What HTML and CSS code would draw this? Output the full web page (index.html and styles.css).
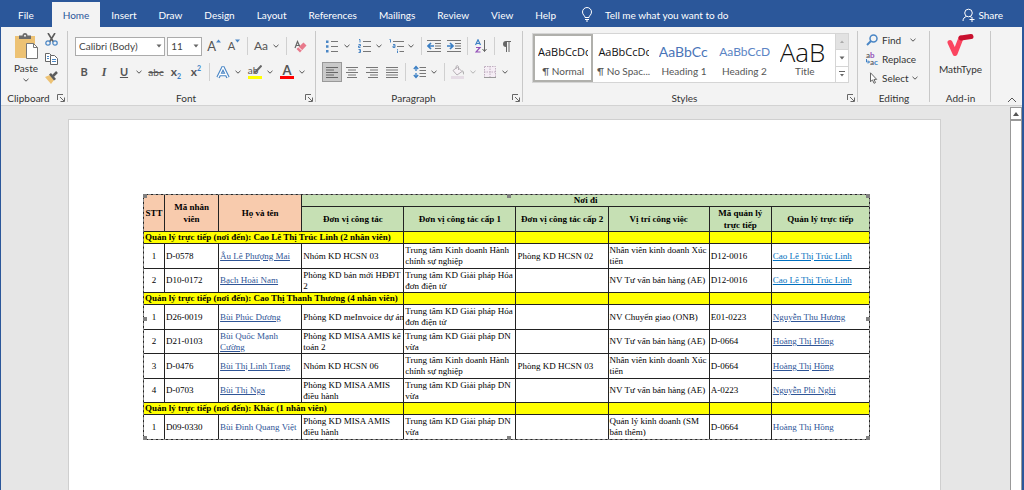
FILE: index.html
```html
<!DOCTYPE html>
<html lang="vi">
<head>
<meta charset="utf-8">
<title>Word</title>
<link rel="stylesheet" href="styles.css">
</head>
<body>
<svg class="defs" aria-hidden="true">
  <symbol id="chev" viewBox="0 0 6 6"><path d="M.5 1.800l2.500 2.400 2.500-2.400" fill="none" stroke="#555" stroke-width="1"/></symbol>
  <symbol id="tri" viewBox="0 0 6 6"><path d="M.5 1.500h5L3 4.500z" fill="#666"/></symbol>
  <symbol id="launch" viewBox="0 0 8 8"><path d="M.5 6V.5H6M3 3l4 4M7.500 3.500v4h-4" fill="none" stroke="#666"/></symbol>
</svg>
<nav class="tabs" aria-label="Ribbon tabs">
  <button class="tab file">File</button>
  <button class="tab active">Home</button>
  <button class="tab">Insert</button>
  <button class="tab">Draw</button>
  <button class="tab">Design</button>
  <button class="tab">Layout</button>
  <button class="tab">References</button>
  <button class="tab">Mailings</button>
  <button class="tab">Review</button>
  <button class="tab">View</button>
  <button class="tab">Help</button>
  <button class="tab tell"><svg width="12" height="15" viewBox="0 0 12 15" fill="none" stroke="#fff"><path d="M4 10.500C4 8.500 1.500 8 1.500 5a4.500 4.500 0 0 1 9 0c0 3-2.500 3.500-2.500 5.500zM4 12.500h4M5 14h2"/></svg>Tell me what you want to do</button>
  <button class="tab share"><svg width="13" height="14" viewBox="0 0 13 14" fill="none" stroke="#fff"><circle cx="6.500" cy="5" r="3.800"/><path d="M1 13c0-2.500 1.500-4 3.500-4.500M8 8.500l1.500.8M10 9v5M7.500 11.500h5"/></svg>Share</button>
</nav>

<section class="ribbon">
  <div class="group clipboard">
    <div class="clip-body">
      <button class="paste">
        <svg width="25" height="27" viewBox="0 0 25 27"><path d="M1 3h20v22H1z" fill="#edc274"/><path d="M5 6V2.500h3.500a2.500 2.500 0 0 1 5 0H17V6z" fill="#6b6b6b"/><circle cx="11" cy="2.800" r="1" fill="#f3f3f3"/><path d="M12.500 10.500h7l4 4v11h-11z" fill="#fff" stroke="#777"/><path d="M19.500 10.500v4h4" fill="none" stroke="#777"/></svg>
        <span>Paste</span>
        <svg width="6" height="6"><use href="#chev"/></svg>
      </button>
      <div class="clip-side">
        <button aria-label="Cut"><svg width="13" height="13" viewBox="0 0 13 13" fill="none"><path d="M3 0l5.500 9M10 0L4.500 9" stroke="#5c5c5c" stroke-width="1.600"/><circle cx="3" cy="10" r="2.200" stroke="#4a86c5" stroke-width="1.200"/><circle cx="10" cy="10" r="2.200" stroke="#4a86c5" stroke-width="1.200"/></svg></button>
        <button aria-label="Copy"><svg width="13" height="13" viewBox="0 0 13 13" fill="#fff" stroke="#666"><path d="M.5 1.500h4l2 2v6h-6z"/><path d="M5.500 3.500h4l3 3v6h-7z"/><path d="M2 4.500h2M2 6.500h2M7 7.500h4M7 9.500h4" stroke="#4a86c5"/></svg></button>
        <button aria-label="Format Painter"><svg width="13" height="13" viewBox="0 0 13 13"><path d="M0 6l5-2 4 5-3 4z" fill="#edc274"/><path d="M4 3.500l2-1.500 5 6-2 1.500z" fill="#5c5c5c"/><path d="M8 5l4-4" stroke="#5c5c5c" stroke-width="2.500"/></svg></button>
      </div>
    </div>
    <div class="caption"><span>Clipboard</span><button aria-label="Clipboard options"><svg width="8" height="8"><use href="#launch"/></svg></button></div>
  </div>

  <div class="group font">
    <div class="row">
      <label class="combo family"><select aria-label="Font"><option>Calibri (Body)</option></select><svg width="6" height="6"><use href="#tri"/></svg></label>
      <label class="combo size"><select aria-label="Font size"><option>11</option></select><svg width="6" height="6"><use href="#tri"/></svg></label>
      <button class="tool grow" aria-label="Grow font">A<svg width="5" height="4" viewBox="0 0 5 4"><path d="M0 3.500h5L2.500.5z" fill="#4a86c5"/></svg></button>
      <button class="tool shrink" aria-label="Shrink font">A<svg width="5" height="4" viewBox="0 0 5 4"><path d="M0 .5h5L2.500 3.500z" fill="#4a86c5"/></svg></button>
      <i class="sep"></i>
      <button class="tool case">Aa</button>
      <button class="drop" aria-label="Change case"><svg width="6" height="6"><use href="#chev"/></svg></button>
      <i class="sep"></i>
      <button class="tool" aria-label="Clear formatting"><svg width="13" height="13" viewBox="0 0 13 13"><path d="M1 8L3.500 1.500 6 7M2 5.500h3" fill="none" stroke="#666" stroke-width="1.200"/><path d="M9.500 2.500l3 3-6.500 7-3.500-3.500z" fill="#e8798b"/><path d="M4.500 7l3.500 3.500" stroke="#fff"/></svg></button>
    </div>
    <div class="row">
      <button class="tool bold">B</button>
      <button class="tool italic">I</button>
      <button class="tool under">U</button>
      <button class="drop" aria-label="Underline style"><svg width="6" height="6"><use href="#chev"/></svg></button>
      <button class="tool strike">abc</button>
      <button class="tool script">x<sub>2</sub></button>
      <button class="tool script">x<sup>2</sup></button>
      <i class="sep"></i>
      <button class="tool" aria-label="Text effects"><svg width="14" height="13" viewBox="0 0 14 13"><path d="M2 11.500L7 1.500l5 10M4 8.500h6" fill="none" stroke="#4a86c5" stroke-width="3.600" stroke-linejoin="round"/><path d="M2 11.500L7 1.500l5 10M4 8.500h6" fill="none" stroke="#fff" stroke-width="1.300"/></svg></button>
      <button class="drop" aria-label="Effects menu"><svg width="6" height="6"><use href="#chev"/></svg></button>
      <button class="tool mark">ab<svg width="9" height="8" viewBox="0 0 9 8"><path d="M8.500.5L3 6.500 1 7.500" stroke="#666" stroke-width="2"/></svg></button>
      <button class="drop" aria-label="Highlight colours"><svg width="6" height="6"><use href="#chev"/></svg></button>
      <button class="tool colour">A</button>
      <button class="drop" aria-label="Font colours"><svg width="6" height="6"><use href="#chev"/></svg></button>
    </div>
    <div class="caption"><span>Font</span><button aria-label="Font options"><svg width="8" height="8"><use href="#launch"/></svg></button></div>
  </div>

  <div class="group para">
    <div class="row">
      <button class="tool" aria-label="Bullets"><svg width="12" height="13" viewBox="0 0 12 13"><path d="M0 .5h2.500V3H0zM0 5.300h2.500v2.500H0zM0 10h2.500v2.500H0z" fill="#4a86c5"/><path d="M5 1.500h7M5 6.500h7M5 11.500h7" stroke="#777"/></svg></button>
      <button class="drop" aria-label="Bullet library"><svg width="6" height="6"><use href="#chev"/></svg></button>
      <button class="tool" aria-label="Numbering"><svg width="13" height="14" viewBox="0 0 13 14"><path d="M1 .5h1v3M.5 5.500h2V7h-2v1.500h2M.5 10.500h2v3h-2M1 12h1" fill="none" stroke="#4a86c5"/><path d="M5 2.500h8M5 7.500h8M5 12.500h8" stroke="#777"/></svg></button>
      <button class="drop" aria-label="Numbering library"><svg width="6" height="6"><use href="#chev"/></svg></button>
      <button class="tool" aria-label="Multilevel list"><svg width="15" height="14" viewBox="0 0 15 14"><path d="M.5.5h1v3M4 5.500h2v3H4V7h2M8.500 10v.8M8.500 11.500V14" fill="none" stroke="#4a86c5"/><path d="M4 2.500h11M8 7.500h7M10.500 12.500H15" stroke="#777"/></svg></button>
      <button class="drop" aria-label="List library"><svg width="6" height="6"><use href="#chev"/></svg></button>
      <i class="sep"></i>
      <button class="tool" aria-label="Decrease indent"><svg width="14" height="12" viewBox="0 0 14 12"><path d="M0 .5h14M8 3.500h6M8 6h6M8 8.500h6M0 11.500h14" stroke="#777"/><path d="M1 6h6M4 3L1 6l3 3" fill="none" stroke="#3b7fc4" stroke-width="1.700"/></svg></button>
      <button class="tool" aria-label="Increase indent"><svg width="14" height="12" viewBox="0 0 14 12"><path d="M0 .5h14M8 3.500h6M8 6h6M8 8.500h6M0 11.500h14" stroke="#777"/><path d="M0 6h6M3 3l3 3-3 3" fill="none" stroke="#3b7fc4" stroke-width="1.700"/></svg></button>
      <i class="sep"></i>
      <button class="tool" aria-label="Sort"><svg width="12" height="14" viewBox="0 0 12 14" fill="none"><path d="M.5 6L3 .8 5.500 6M1.500 4.500h3" stroke="#3b7fc4" stroke-width="1.200"/><path d="M1 8.500h4l-4 4.500h4.500" stroke="#9350b8" stroke-width="1.200"/><path d="M9.500 1v11.500M7.500 10l2 2.500 2-2.500" stroke="#666"/></svg></button>
      <i class="sep"></i>
      <button class="tool" aria-label="Show marks"><svg width="9" height="11" viewBox="0 0 9 11"><path d="M4 0h5v1H4zM4 6a3 3 0 0 1 0-6h1v6z" fill="#666"/><path d="M4.500 0v11M7 0v11" stroke="#666"/></svg></button>
    </div>
    <div class="row">
      <button class="tool on" aria-label="Align left"><svg width="12" height="11" viewBox="0 0 12 11"><path d="M0 .5h12M0 3h8M0 5.500h12M0 8h8M0 10.500h12" stroke="#666"/></svg></button>
      <button class="tool" aria-label="Centre"><svg width="12" height="11" viewBox="0 0 12 11"><path d="M0 .5h12M2 3h8M0 5.500h12M2 8h8M1 10.500h10" stroke="#777"/></svg></button>
      <button class="tool" aria-label="Align right"><svg width="12" height="11" viewBox="0 0 12 11"><path d="M0 .5h12M4 3h8M0 5.500h12M4 8h8M2 10.500h10" stroke="#777"/></svg></button>
      <button class="tool" aria-label="Justify"><svg width="12" height="11" viewBox="0 0 12 11"><path d="M0 .5h12M0 3h12M0 5.500h12M0 8h12M0 10.500h12" stroke="#777"/></svg></button>
      <i class="sep"></i>
      <button class="tool" aria-label="Line spacing"><svg width="13" height="14" viewBox="0 0 13 14"><path d="M3 1v12M.8 4L3 1.500 5.200 4M.8 10L3 12.500 5.200 10" fill="none" stroke="#3b7fc4" stroke-width="1.300"/><path d="M3 6v2" stroke="#f3f3f3" stroke-width="2"/><path d="M6.500 2.500H13M6.500 5.500H13M6.500 8.500H13M6.500 11.500H13" stroke="#777"/></svg></button>
      <button class="drop" aria-label="Spacing menu"><svg width="6" height="6"><use href="#chev"/></svg></button>
      <i class="sep"></i>
      <button class="tool" aria-label="Shading"><svg width="14" height="14" viewBox="0 0 14 14"><path d="M2 5.500L6.500 2 11 6.500 6 10z" fill="#f7f2f6" stroke="#b5b0b5"/><path d="M5 4V1.500Q6.500-.5 7.500 1.500V5" fill="none" stroke="#b5b0b5"/><path d="M11 5q3 2 1.500 5z" fill="#a9a9a9"/><path d="M0 11h13v3H0z" fill="#e5dce5"/></svg></button>
      <button class="drop faint" aria-label="Shading menu"><svg width="6" height="6"><use href="#chev"/></svg></button>
      <button class="tool" aria-label="Borders"><svg width="12" height="12" viewBox="0 0 12 12"><path d="M.5.5h11v11H.5zM6 0v12M0 6h12" fill="#f5edf5" stroke="#c0afc0" stroke-dasharray="1.500 1"/><path d="M0 11.500h12" stroke="#999"/></svg></button>
      <button class="drop" aria-label="Borders menu"><svg width="6" height="6"><use href="#chev"/></svg></button>
    </div>
    <div class="caption"><span>Paragraph</span><button aria-label="Paragraph options"><svg width="8" height="8"><use href="#launch"/></svg></button></div>
  </div>

  <div class="group styles">
    <div class="gallery">
      <button class="style chosen"><span class="sample">AaBbCcDc</span><span>¶ Normal</span></button>
      <button class="style"><span class="sample">AaBbCcDc</span><span>¶ No Spac...</span></button>
      <button class="style h1"><span class="sample">AaBbCc</span><span>Heading 1</span></button>
      <button class="style h2"><span class="sample">AaBbCcD</span><span>Heading 2</span></button>
      <button class="style title"><span class="sample">AaB</span><span>Title</span></button>
      <div class="scroller">
        <button class="off" aria-label="Previous styles"><svg width="6" height="6" viewBox="0 0 6 6"><path d="M1 4h4L3 1.500z" fill="#aaa"/></svg></button>
        <button aria-label="Next styles"><svg width="6" height="6"><use href="#tri"/></svg></button>
        <button aria-label="More styles"><svg width="6" height="8" viewBox="0 0 6 8"><path d="M0 1.500h6" stroke="#666"/><path d="M1 4h4L3 6.500z" fill="#666"/></svg></button>
      </div>
    </div>
    <div class="caption"><span>Styles</span><button aria-label="Styles options"><svg width="8" height="8"><use href="#launch"/></svg></button></div>
  </div>

  <div class="group editing">
    <div class="edit-list">
      <button><svg width="13" height="12" viewBox="0 0 13 12" fill="none" stroke="#4a86c5"><circle cx="7.500" cy="4.500" r="3.500" stroke-width="1.500"/><path d="M5 7L1 11" stroke-width="2"/></svg>Find<svg class="far" width="6" height="6"><use href="#chev"/></svg></button>
      <button><span class="swap"><b>a<em>b</em></b><b><svg width="4" height="5" viewBox="0 0 4 5" fill="none" stroke="#3b7fc4"><path d="M.5 0v3h3M2 1.500L3.500 3 2 4.500"/></svg>a<i>c</i></b></span>Replace</button>
      <button><svg width="13" height="12" viewBox="0 0 13 12"><path d="M4.500.8v9l2-2 1.500 3.500 1.500-.7-1.500-3.200h2.700z" fill="#fff" stroke="#666"/></svg>Select<svg width="6" height="6"><use href="#chev"/></svg></button>
    </div>
    <div class="caption"><span>Editing</span></div>
  </div>

  <div class="group addin">
    <button class="math"><svg width="27" height="24" viewBox="0 0 27 24" fill="none" stroke-linecap="round" stroke-linejoin="round"><path d="M3 9.500l5 11L14 5" stroke="#fb4560" stroke-width="5"/><path d="M14 5l10-1.500" stroke="#c8102e" stroke-width="5"/></svg>MathType</button>
    <div class="caption"><span>Add-in</span></div>
  </div>

  <button class="collapse" aria-label="Collapse ribbon"><svg width="10" height="6" viewBox="0 0 10 6"><path d="M1 5l4-4 4 4" fill="none" stroke="#555"/></svg></button>
</section>

<main class="work">
  <article class="page">
    <div class="object">
      <table>
        <colgroup><col class="c-no"><col class="c-id"><col class="c-name"><col class="c-unit"><col class="c-lv1"><col class="c-lv2"><col class="c-job"><col class="c-mid"><col class="c-mgr"></colgroup>
        <thead>
          <tr><th rowspan="2" class="peach">STT</th><th rowspan="2" class="peach">Mã nhân<br>viên</th><th rowspan="2" class="peach">Họ và tên</th><th colspan="6">Nơi đi</th></tr>
          <tr class="tall"><th>Đơn vị công tác</th><th>Đơn vị công tác cấp 1</th><th>Đơn vị công tác cấp 2</th><th>Vị trí công việc</th><th>Mã quản lý<br>trực tiếp</th><th>Quản lý trực tiếp</th></tr>
        </thead>
        <tbody>
          <tr class="band"><th colspan="4">Quản lý trực tiếp (nơi đến): Cao Lê Thị Trúc Linh (2 nhân viên)</th><td></td><td></td><td></td><td></td><td></td></tr>
          <tr><td>1</td><td>D-0578</td><td><a href="#">Âu Lê Phượng Mai</a></td><td>Nhóm KD HCSN 03</td><td>Trung tâm Kinh doanh Hành<br>chính sự nghiệp</td><td>Phòng KD HCSN 02</td><td>Nhân viên kinh doanh Xúc<br>tiến</td><td>D12-0016</td><td><a href="#" class="bright">Cao Lê Thị Trúc Linh</a></td></tr>
          <tr><td>2</td><td>D10-0172</td><td><a href="#">Bạch Hoài Nam</a></td><td>Phòng KD bán mới HĐĐT<br>2</td><td>Trung tâm KD Giải pháp Hóa<br>đơn điện tử</td><td></td><td>NV Tư vấn bán hàng (AE)</td><td>D12-0016</td><td><a href="#" class="bright">Cao Lê Thị Trúc Linh</a></td></tr>
        </tbody>
        <tbody>
          <tr class="band"><th colspan="4">Quản lý trực tiếp (nơi đến): Cao Thị Thanh Thương (4 nhân viên)</th><td></td><td></td><td></td><td></td><td></td></tr>
          <tr><td>1</td><td>D26-0019</td><td><a href="#">Bùi Phúc Dương</a></td><td>Phòng KD meInvoice dự án</td><td>Trung tâm KD Giải pháp Hóa<br>đơn điện tử</td><td></td><td>NV Chuyển giao (ONB)</td><td>E01-0223</td><td><a href="#">Nguyễn Thu Hương</a></td></tr>
          <tr><td>2</td><td>D21-0103</td><td><a href="#"><span class="plain">Bùi Quốc Mạnh</span><br>Cường</a></td><td>Phòng KD MISA AMIS kế<br>toán 2</td><td>Trung tâm KD Giải pháp DN<br>vừa</td><td></td><td>NV Tư vấn bán hàng (AE)</td><td>D-0664</td><td><a href="#">Hoàng Thị Hồng</a></td></tr>
          <tr><td>3</td><td>D-0476</td><td><a href="#">Bùi Thị Linh Trang</a></td><td>Nhóm KD HCSN 06</td><td>Trung tâm Kinh doanh Hành<br>chính sự nghiệp</td><td>Phòng KD HCSN 03</td><td>Nhân viên kinh doanh Xúc<br>tiến</td><td>D-0664</td><td><a href="#">Hoàng Thị Hồng</a></td></tr>
          <tr><td>4</td><td>D-0703</td><td><a href="#">Bùi Thị Nga</a></td><td>Phòng KD MISA AMIS<br>điều hành</td><td>Trung tâm KD Giải pháp DN<br>vừa</td><td></td><td>NV Tư vấn bán hàng (AE)</td><td>A-0223</td><td><a href="#">Nguyễn Phi Nghị</a></td></tr>
        </tbody>
        <tbody>
          <tr class="band"><th colspan="4">Quản lý trực tiếp (nơi đến): Khác (1 nhân viên)</th><td></td><td></td><td></td><td></td><td></td></tr>
          <tr><td>1</td><td>D09-0330</td><td><a href="#" class="plain">Bùi Đinh Quang Việt</a></td><td>Phòng KD MISA AMIS<br>điều hành</td><td>Trung tâm KD Giải pháp DN<br>vừa</td><td></td><td>Quản lý kinh doanh (SM<br>bán thêm)</td><td>D-0664</td><td><a href="#" class="plain">Hoàng Thị Hồng</a></td></tr>
        </tbody>
      </table>
      <i class="handle n w"></i><i class="handle n mid"></i><i class="handle n e"></i>
      <i class="handle half w"></i><i class="handle half e"></i>
      <i class="handle s w"></i><i class="handle s mid"></i><i class="handle s e"></i>
    </div>
  </article>
  <div class="scrollbar"><button aria-label="Scroll up"><svg width="6" height="6" viewBox="0 0 6 6"><path d="M0 5h6L3 1z" fill="#555"/></svg></button><div class="thumb"></div></div>
</main>
</body>
</html>
```
FILE: styles.css
```css
* { box-sizing: border-box; }
html, body { height: 100%; margin: 0; }
body {
  display: flex;
  flex-direction: column;
  overflow: hidden;
  background: #2b579a;
  font: 10px/14px Lato, "Open Sans", sans-serif;
  color: #333;
}
button, select { font: inherit; color: inherit; border: 0; margin: 0; padding: 0; background: none; }
svg { display: block; flex: none; }
.defs { position: absolute; width: 0; height: 0; }

/* tabs */
.tabs { display: flex; flex: none; height: 27px; padding-top: 2px; }
.tab { display: flex; align-items: center; padding: 0 11px; color: #fff; white-space: nowrap; }
.file { padding: 0 18px; }
.active { background: #f3f3f3; color: #2b579a; }
.tell { gap: 12px; padding-left: 14px; }
.share { gap: 3px; margin-left: auto; padding-right: 21px; }

/* ribbon */
.ribbon {
  display: flex;
  flex: none;
  height: 79px;
  margin: 0 2px 0 1px;
  background: #f3f3f3;
  border-bottom: 1px solid #d2d2d2;
}
.group {
  position: relative;
  display: flex;
  flex-direction: column;
  flex: none;
  padding: 6px 6px 0;
}
.group::after {
  content: "";
  position: absolute;
  top: 4px;
  bottom: 3px;
  right: 0;
  width: 1px;
  background: #c8c8c8;
}
.clipboard { width: 67px; }
.font { width: 248px; }
.para { width: 207px; }
.styles { width: 335px; }
.editing { width: 72px; padding-top: 3px; }
.addin { width: 61px; }
.caption { display: flex; align-items: center; height: 14px; margin-top: auto; }
.caption span { flex: 1; text-align: center; }
.caption span:not(:last-child) { padding-right: 7px; }
.caption button { width: 8px; margin-right: -3px; }

.clip-body { display: flex; justify-content: space-between; }
.paste { display: flex; flex-direction: column; align-items: center; width: 38px; }
.paste span { line-height: 17px; }
.clip-side { display: flex; flex-direction: column; gap: 6px; margin-right: 4px; }
.clip-side button { height: 13px; }

.row { display: flex; align-items: center; height: 26px; }
.tool { display: flex; align-items: center; justify-content: center; width: 20px; height: 20px; flex: none; color: #555; }
.drop { width: 12px; height: 20px; flex: none; padding-left: 2px; }
.faint { opacity: .4; }
.sep { width: 1px; height: 18px; margin: 0 3px; background: #d0d0d0; }
.on { background: #c9c9c9; border: 1px solid #999; }
.combo { position: relative; display: block; height: 19px; margin-right: 2px; }
.combo select { width: 100%; height: 100%; padding: 0 12px 0 3px; appearance: none; background: #fff; border: 1px solid #ababab; color: #444; }
.combo svg { position: absolute; right: 3px; top: 6px; }
.family { width: 93px; margin-left: 1px; }
.size { width: 36px; }
.grow { font-size: 13px; }
.shrink { font-size: 11px; }
.grow svg, .shrink svg { align-self: flex-start; margin-top: 3px; }
.case { font-size: 12px; }
.bold { font-weight: bold; font-size: 11px; }
.italic { font: italic bold 12px "Liberation Serif", serif; }
.under { font-weight: bold; font-size: 11px; text-decoration: underline; }
.strike { text-decoration: line-through; }
.script { font-size: 12px; font-weight: bold; line-height: 12px; }
.script sub, .script sup { font-size: 7px; color: #3b7fc4; line-height: 7px; }
.script sub { align-self: flex-end; margin-bottom: 2px; }
.script sup { align-self: flex-start; margin-top: 3px; }
.mark { width: 14px; height: 14px; margin: 0 3px; line-height: 10px; align-items: flex-start; border-bottom: 3px solid #ff0; }
.mark svg { margin-left: -5px; }
.colour { width: 14px; height: 14px; margin: 0 3px; font-size: 13px; font-weight: bold; line-height: 11px; align-items: flex-end; border-bottom: 3px solid #f00; }

/* style gallery */
.gallery { display: flex; height: 50px; margin: 0 3px; background: #fff; border: 1px solid #d5d5d5; }
.style { display: flex; flex-direction: column; align-items: center; flex: 1; min-width: 0; padding: 6px 5px 0; color: #555; white-space: nowrap; }
.sample { width: 100%; height: 24px; overflow: hidden; text-align: left; color: #111; font: 11px/24px "Open Sans", sans-serif; }
.chosen { outline: 2px solid #b0b0ac; outline-offset: -2px; }
.h1 .sample { font: 14px/24px Lato, sans-serif; color: #4a74b8; }
.h2 .sample { font: 12px/24px Lato, sans-serif; color: #5b84c4; }
.title .sample { font: 300 26px/24px "Open Sans", Lato, sans-serif; }
.scroller { display: flex; flex-direction: column; width: 13px; flex: none; border-left: 1px solid #d5d5d5; }
.scroller button { display: flex; flex: 1; align-items: center; justify-content: center; }
.scroller button + button { border-top: 1px solid #d5d5d5; }
.off { background: #e2e2e2; }

.edit-list { display: flex; flex-direction: column; margin-left: 2px; }
.edit-list button { display: flex; align-items: center; gap: 3px; height: 19px; text-align: left; }
.edit-list .far { margin-left: 6px; }
.swap { width: 13px; font-size: 8px; line-height: 7px; }
.swap b { display: flex; font-weight: bold; color: #666; }
.swap em { font-style: normal; color: #9350b8; }
.swap i { font-style: normal; color: #3b7fc4; }
.math { display: flex; flex-direction: column; align-items: center; gap: 5px; }
.collapse { margin: auto 5px 2px auto; }

/* document */
.work { display: flex; flex: 1; min-height: 0; margin: 0 2px 0 1px; background: #e6e6e6; }
.page { flex: 1; margin: 13px 69px 0 67px; padding: 74px 70px 0 74px; background: #fff; border: 1px solid #cfcfcf; border-bottom: 0; }
.object { position: relative; font: 9px/12px "Liberation Serif", serif; color: #000; }
table { width: 100%; table-layout: fixed; border-collapse: collapse; outline: 1px dashed #888; outline-offset: -1px; }
.c-no { width: 21px; }
.c-id { width: 54px; }
.c-name { width: 83px; }
.c-unit { width: 102px; }
.c-lv1 { width: 112px; }
.c-lv2 { width: 92px; }
.c-job { width: 101px; }
.c-mid { width: 62px; }
.c-mgr { width: 98px; }
th, td { height: 24px; padding: 0 0 0 1px; border: 1px solid #222; text-align: left; white-space: nowrap; line-height: 11px; }
td:first-child { padding: 0; text-align: center; }
thead th { height: 12px; padding: 0; background: #c6e0b4; text-align: center; }
.tall th { height: 25px; line-height: 12px; }
thead .peach { background: #f8cbad; line-height: 12px; }
tr:nth-child(even) td { height: 25px; }
tbody .band { background: #ff0; }
tbody .band th, tbody .band td { height: 12px; }
a { color: #2f5597; text-decoration: underline; }
.bright { color: #0070c0; }
a.plain { text-decoration: none; }
.plain { display: inline-block; }
.handle { position: absolute; width: 4px; height: 4px; background: #808080; }
.n { top: 0; }
.half { top: 50%; }
.s { bottom: 0; }
.w { left: 0; }
.e { right: 0; }
.mid { left: 50%; }

.scrollbar { display: flex; flex-direction: column; width: 12px; padding-top: 1px; flex: none; }
.scrollbar button { display: flex; align-items: center; justify-content: center; height: 13px; background: #fff; border: 1px solid #999; }
.thumb { flex: 1; background: #fff; border: 1px solid #999; border-bottom: 0; }
```
